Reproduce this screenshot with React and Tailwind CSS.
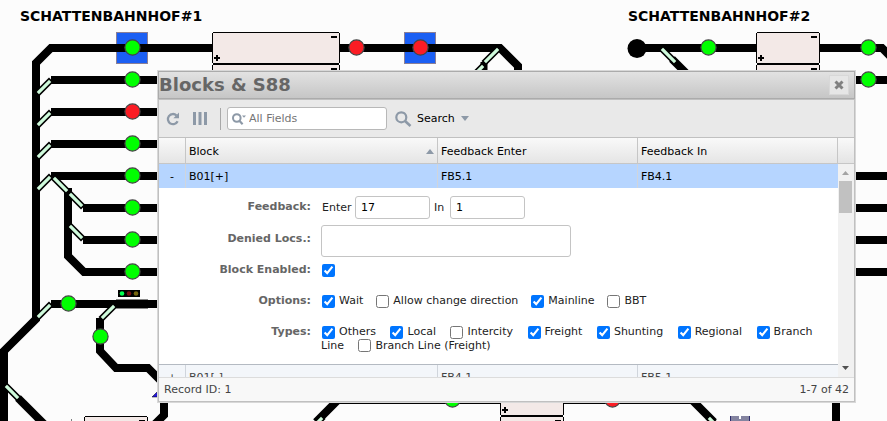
import React from "react";

const GREEN = "#00ff00";
const RED = "#fb1c24";

function Sensor({ x, y, color = GREEN }) {
  return <circle cx={x} cy={y} r="7.6" fill={color} stroke="#444" strokeWidth="1.2" />;
}

function Switch({ from, to }) {
  const line = { x1: from[0], y1: from[1], x2: to[0], y2: to[1] };
  return (
    <g>
      <line {...line} stroke="#000" strokeWidth="6.4" strokeLinecap="square" />
      <line {...line} stroke="#cffbdc" strokeWidth="3.2" strokeLinecap="square" />
    </g>
  );
}

function Block({ x, y, width }) {
  return (
    <g shapeRendering="crispEdges">
      <rect x={x + 0.5} y={y + 0.5} width={width - 1} height="31" rx="2" fill="#f3e9e7" stroke="#000" />
      <path d={`M${x + 2} ${y + 26}h6M${x + 5} ${y + 23}v6`} stroke="#000" strokeWidth="2" />
      <path d={`M${x + width - 9} ${y + 5}h6`} stroke="#000" strokeWidth="2" />
    </g>
  );
}

function TrackPlan() {
  return (
    <svg className="absolute inset-0 h-full w-full" aria-hidden="true">
      <g fill="#1b5ff3" stroke="#8a7f96" shapeRendering="crispEdges">
        <rect x="116.5" y="32.5" width="31" height="31" />
        <rect x="404.5" y="32.5" width="31" height="31" />
      </g>
      <g fill="none" stroke="#000" strokeWidth="8">
        <path d="M4 425V351L36 319V63L51 48H500L518 66V80" />
        <path d="M51 80H170M51 112H170M51 144H170M51 176H170" />
        <path d="M83 208H170M83 240H170" />
        <path d="M68 188V256L84 272H170" />
        <path d="M51 304H170" />
        <path d="M100 318V351L116 368H148L164 384V415L154 425" />
        <path d="M18 398L46 426" />
        <path d="M484 62V80" strokeWidth="7" />
        <path d="M637 48H882L893 59M672 59L694 81" />
        <path d="M850 80H890M850 176H890M850 208H890M850 240H890M850 272H890" />
        <path d="M836 390V425" />
        <path d="M316 422L338 400H692L714 422" />
      </g>
      <circle cx="637" cy="48.5" r="9.5" />
      <Switch from={[39, 92]} to={[49, 82]} />
      <Switch from={[39, 124]} to={[49, 114]} />
      <Switch from={[39, 156]} to={[49, 146]} />
      <Switch from={[39, 188]} to={[49, 178]} />
      <Switch from={[55, 179]} to={[66, 190]} />
      <Switch from={[71, 195]} to={[81, 205]} />
      <Switch from={[71, 227]} to={[81, 237]} />
      <Switch from={[39, 316]} to={[49, 306]} />
      <Switch from={[113, 307]} to={[103, 317]} />
      <Switch from={[7, 387]} to={[17, 397]} />
      <Switch from={[497, 50]} to={[486, 61]} />
      <Switch from={[482, 67]} to={[477, 72]} />
      <Switch from={[663, 50]} to={[674, 61]} />
      <Switch from={[321, 419]} to={[317, 423]} />
      <Switch from={[710, 419]} to={[714, 423]} />
      <path d="M116 299.5h32M116 308.5h32" stroke="#888" />
      <rect x="118" y="290" width="22" height="7" />
      <circle cx="122" cy="293.5" r="2.3" fill="#00ff50" />
      <circle cx="129" cy="293.5" r="2.3" fill="#750d12" />
      <circle cx="136" cy="293.5" r="2.3" fill="#75650d" />
      <path d="M152 397L160 389V397Z" fill="#2418d8" stroke="#000" strokeWidth="0.5" />
      <path d="M71 420h1" stroke="#000" />
      <Block x={212} y={32} width={128} />
      <Block x={212} y={64} width={128} />
      <Block x={756} y={32} width={64} />
      <Block x={756} y={64} width={64} />
      <Block x={500} y={384} width={64} />
      <Block x={500} y={416} width={64} />
      <Block x={84} y={416} width={64} />
      <Sensor x={132.5} y={47.5} />
      <Sensor x={132.5} y={79.5} />
      <Sensor x={132.5} y={111.5} color={RED} />
      <Sensor x={132.5} y={143.5} />
      <Sensor x={132.5} y={175.5} />
      <Sensor x={132.5} y={207.5} />
      <Sensor x={132.5} y={239.5} />
      <Sensor x={132.5} y={271.5} />
      <Sensor x={68.5} y={303.5} />
      <Sensor x={100.5} y={336.5} />
      <Sensor x={356.5} y={47.5} color={RED} />
      <Sensor x={420.5} y={47.5} color={RED} />
      <Sensor x={708.5} y={47.5} />
      <Sensor x={868.5} y={47.5} />
      <Sensor x={868.5} y={79.5} />
      <Sensor x={452.5} y={399.5} />
      <Sensor x={612.5} y={399.5} color={RED} />
      <g shapeRendering="crispEdges">
        <rect x="730" y="416" width="20" height="8" fill="#8484a0" />
        <path d="M730.5 416v8M749.5 416v8" stroke="#2c2c6c" />
        <path d="M740 416v3" stroke="#fff" strokeWidth="2" />
      </g>
    </svg>
  );
}

function Check({ label, checked = false, spacing = "mr-[10px]" }) {
  return (
    <label className={spacing}>
      <input
        type="checkbox"
        defaultChecked={checked}
        className="mr-1 ml-px h-[13px] w-[13px] align-middle accent-[#0075ff]"
      />
      {label}
    </label>
  );
}

const types = [
  ["Others", true],
  ["Local", true],
  ["Intercity", false],
  ["Freight", true],
  ["Shunting", true],
  ["Regional", true],
  ["Branch Line", true],
  ["Branch Line (Freight)", false],
];

const caption = "w-[152px] shrink-0 text-right font-bold text-[#666]";
const field = "rounded-[3px] border border-[#c4c4c4] bg-white text-black";

function Details() {
  return (
    <div className="flex h-44 flex-col pt-2 pr-4 text-[#222]">
      <div className="flex h-[29px] gap-[10px]">
        <span className={`${caption} pt-1`}>Feedback:</span>
        <div className="flex h-[23px] items-center">
          <label htmlFor="enter" className="w-[34px] pl-px">Enter</label>
          <input id="enter" defaultValue="17" className={`${field} h-[23px] w-[75px] px-[5px]`} />
          <label htmlFor="in" className="w-5 pl-1">In</label>
          <input id="in" defaultValue="1" className={`${field} h-[23px] w-[75px] px-[5px]`} />
        </div>
      </div>
      <div className="flex h-[38px] gap-[10px]">
        <label htmlFor="denied" className={`${caption} pt-[7px]`}>Denied Locs.:</label>
        <textarea id="denied" className={`${field} h-8 w-[250px] resize-none`} />
      </div>
      <div className="flex h-[31px] gap-[10px]">
        <label htmlFor="enabled" className={caption}>Block Enabled:</label>
        <div>
          <input id="enabled" type="checkbox" defaultChecked className="ml-px h-[13px] w-[13px] align-middle accent-[#0075ff]" />
        </div>
      </div>
      <div className="flex h-[31px] gap-[10px]">
        <span className={caption}>Options:</span>
        <div>
          <Check label="Wait" checked spacing="mr-3" />
          <Check label="Allow change direction" spacing="mr-3" />
          <Check label="Mainline" checked spacing="mr-3" />
          <Check label="BBT" />
        </div>
      </div>
      <div className="flex gap-[10px]">
        <span className={caption}>Types:</span>
        <div className="min-w-0 flex-1">
          {types.map(([label, checked]) => (
            <React.Fragment key={label}>
              <Check label={label} checked={checked} />{" "}
            </React.Fragment>
          ))}
        </div>
      </div>
    </div>
  );
}

const head = "border-r border-b border-[#c6c6c6] px-[3px] pt-[2px] text-left font-normal";
const cell = "border-r border-[#d0d5dc] px-[3px]";

function BlocksTable() {
  return (
    <table className="w-full table-fixed border-separate border-spacing-0">
      <colgroup>
        <col className="w-[27px]" />
        <col className="w-[252px]" />
        <col className="w-[200px]" />
        <col />
      </colgroup>
      <thead>
        <tr className="h-[26px] bg-linear-to-b from-[#f9f9f9] to-[#e4e4e4]">
          <th className={head}></th>
          <th className={head}>
            <span className="flex items-center justify-between">
              Block
              <svg width="8" height="5" aria-hidden="true"><path d="M0 5L4 0L8 5Z" fill="#8d99a7" /></svg>
            </span>
          </th>
          <th className={head}>Feedback Enter</th>
          <th className={head}>Feedback In</th>
        </tr>
      </thead>
      <tbody>
        <tr className="h-6 bg-[#b6d5ff] text-black">
          <td className={`${cell} text-center`}>-</td>
          <td className={cell}>B01[+]</td>
          <td className={cell}>FB5.1</td>
          <td className="px-[3px]">FB4.1</td>
        </tr>
        <tr>
          <td colSpan={4} className="border-b border-[#b4bac2] bg-white p-0">
            <Details />
          </td>
        </tr>
        <tr className="h-6 bg-[#f3f6fa] text-[#444]">
          <td className={`${cell} text-center`}>+</td>
          <td className={cell}>B01[-]</td>
          <td className={cell}>FB4.1</td>
          <td className="px-[3px]">FB5.1</td>
        </tr>
      </tbody>
    </table>
  );
}

function Scrollbar() {
  return (
    <div className="flex flex-1 flex-col items-center bg-[#f1f1f1] pt-[7px] pr-px pb-[7px]">
      <svg width="7" height="4" aria-hidden="true"><path d="M0 4L3.5 0L7 4Z" fill="#a3a3a3" /></svg>
      <div className="mt-[6px] h-8 w-[13px] bg-[#c1c1c1]" />
      <svg className="mt-auto" width="7" height="4" aria-hidden="true"><path d="M0 0L3.5 4L7 0Z" fill="#505050" /></svg>
    </div>
  );
}

function BlocksWindow() {
  return (
    <section className="absolute top-[70px] right-[31px] left-[157px] border border-[#d8d8d8] bg-[#e9e9e9]">
      <header className="flex h-7 items-center justify-between border border-[#ababab] bg-linear-to-b from-[#e2e2e2] to-[#c6c6c6] pr-[5px]">
        <h2 className="text-lg font-bold text-[#666]">Blocks &amp; S88</h2>
        <button aria-label="Close" className="flex h-5 w-5 items-center justify-center border border-[#d8d8d8] bg-[#e6e6e6]">
          <svg width="10" height="10" viewBox="0 0 10 10" aria-hidden="true">
            <path d="M1.5 1.5L8.5 8.5M8.5 1.5L1.5 8.5" stroke="#808080" strokeWidth="3" />
          </svg>
        </button>
      </header>
      <div className="border border-[#c0c0c0]">
        <div className="flex h-[38px] items-center border-b border-[#c0c0c0]">
          <button aria-label="Reload" className="ml-[7px]">
            <svg width="14" height="14" viewBox="0 0 14 14" fill="none" aria-hidden="true">
              <path d="M11.6 9.3A5.1 5.1 0 1 1 10.4 3.3" stroke="#8d99a7" strokeWidth="2.3" />
              <path d="M13 0.6V6.2H7.4Z" fill="#8d99a7" />
            </svg>
          </button>
          <button aria-label="Columns" className="ml-[13px]">
            <svg width="14" height="13" aria-hidden="true">
              <path d="M1.5 0v13M7 0v13M12.5 0v13" stroke="#8d99a7" strokeWidth="3" />
            </svg>
          </button>
          <div className="ml-[13px] h-[22px] w-px bg-[#a8a8a8]" />
          <label className="ml-[6px] flex h-[23px] w-40 items-center rounded-[3px] border border-[#b8b8b8] bg-white pl-1">
            <svg width="14" height="12" viewBox="0 0 14 12" fill="none" aria-hidden="true">
              <circle cx="4.8" cy="5" r="3.8" stroke="#8d99a7" strokeWidth="2" />
              <path d="M7.4 7.8L10.6 11.2" stroke="#8d99a7" strokeWidth="2.2" />
              <path d="M10 2.5H14L12 4.8Z" fill="#8d99a7" />
            </svg>
            <input aria-label="All Fields" placeholder="All Fields" className="ml-[3px] w-32 placeholder:text-[#757575]" />
          </label>
          <button className="ml-2 flex items-center text-black">
            <svg width="17" height="16" viewBox="0 0 17 16" fill="none" aria-hidden="true">
              <circle cx="6.3" cy="6.3" r="5" stroke="#8d99a7" strokeWidth="2.2" />
              <path d="M10 10L15.5 15" stroke="#8d99a7" strokeWidth="2.6" />
            </svg>
            <span className="ml-[5px]">Search</span>
            <svg className="ml-[6px]" width="8" height="5" aria-hidden="true"><path d="M0 0H8L4 5Z" fill="#8d99a7" /></svg>
          </button>
        </div>
        <div className="flex h-[239px] overflow-hidden">
          <div className="min-w-0 flex-1"><BlocksTable /></div>
          <div className="flex w-4 flex-col">
            <div className="h-[26px] border-b border-[#c6c6c6] bg-linear-to-b from-[#f9f9f9] to-[#e4e4e4]" />
            <Scrollbar />
          </div>
        </div>
        <footer className="flex h-6 items-center justify-between border-t border-[#dcdcdc] bg-[#f8f8f8] px-[5px] text-[#444]">
          <span>Record ID: 1</span>
          <span>1-7 of 42</span>
        </footer>
      </div>
    </section>
  );
}

export default function App() {
  return (
    <main className="relative min-h-screen overflow-hidden bg-[#fcfcfc] font-['DejaVu_Sans',sans-serif] text-[11px] leading-[13px] text-black">
      <TrackPlan />
      <h1 className="absolute top-2 left-5 text-sm leading-4 font-bold">SCHATTENBAHNHOF#1</h1>
      <h1 className="absolute top-2 left-[628px] text-sm leading-4 font-bold">SCHATTENBAHNHOF#2</h1>
      <BlocksWindow />
    </main>
  );
}
